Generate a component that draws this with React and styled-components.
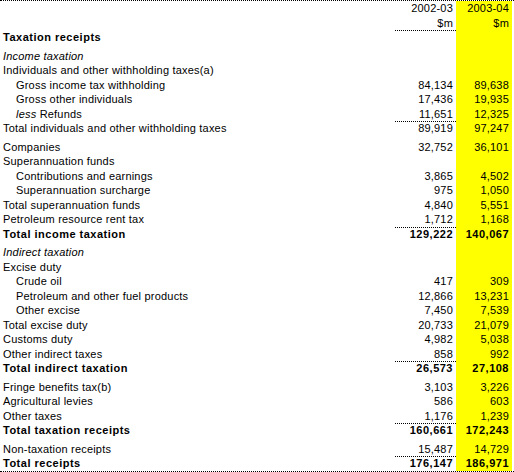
import styled, { createGlobalStyle } from "styled-components"

const GlobalStyle = createGlobalStyle`
    html, body {
        margin: 0;
        padding: 0;
        background: #fff;
    }
    body {
        font-family: "Liberation Sans", Arial, sans-serif;
        font-size: 11px;
        color: #000;
    }
`

const rows = [
    { label: "Taxation receipts", bold: true },
    { label: "Income taxation", italic: true, tall: true },
    { label: "Individuals and other withholding taxes(a)" },
    { label: "Gross income tax withholding", indent: true, a: "84,134", b: "89,638" },
    { label: "Gross other individuals", indent: true, a: "17,436", b: "19,935" },
    { label: "Refunds", less: true, indent: true, a: "11,651", b: "12,325", rule: true },
    { label: "Total individuals and other withholding taxes", a: "89,919", b: "97,247" },
    { label: "Companies", a: "32,752", b: "36,101", tall: true },
    { label: "Superannuation funds" },
    { label: "Contributions and earnings", indent: true, a: "3,865", b: "4,502" },
    { label: "Superannuation surcharge", indent: true, a: "975", b: "1,050" },
    { label: "Total superannuation funds", a: "4,840", b: "5,551" },
    { label: "Petroleum resource rent tax", a: "1,712", b: "1,168", rule: true },
    { label: "Total income taxation", bold: true, a: "129,222", b: "140,067" },
    { label: "Indirect taxation", italic: true, tall: true },
    { label: "Excise duty" },
    { label: "Crude oil", indent: true, a: "417", b: "309" },
    { label: "Petroleum and other fuel products", indent: true, a: "12,866", b: "13,231" },
    { label: "Other excise", indent: true, a: "7,450", b: "7,539" },
    { label: "Total excise duty", a: "20,733", b: "21,079" },
    { label: "Customs duty", a: "4,982", b: "5,038" },
    { label: "Other indirect taxes", a: "858", b: "992", rule: true },
    { label: "Total indirect taxation", bold: true, a: "26,573", b: "27,108" },
    { label: "Fringe benefits tax(b)", a: "3,103", b: "3,226", tall: true },
    { label: "Agricultural levies", a: "586", b: "603" },
    { label: "Other taxes", a: "1,176", b: "1,239", rule: true },
    { label: "Total taxation receipts", bold: true, a: "160,661", b: "172,243" },
    { label: "Non-taxation receipts", a: "15,487", b: "14,729", rule: true, tall: true },
    { label: "Total receipts", bold: true, a: "176,147", b: "186,971" },
]

export default function App() {
    return (
        <>
            <GlobalStyle />
            <Sheet>
                <Row>
                    <Label />
                    <Num>2002-03</Num>
                    <Num $hl>2003-04</Num>
                </Row>
                <Row>
                    <Label />
                    <Num $rule>$m</Num>
                    <Num $hl $rule>$m</Num>
                </Row>
                {rows.map((r, i) => (
                    <Row key={i} $tall={r.tall}>
                        <Label $indent={r.indent} $bold={r.bold} $italic={r.italic}>
                            {r.less && <i>less </i>}
                            {r.label}
                        </Label>
                        <Num $rule={r.rule} $bold={r.bold}>{r.a}</Num>
                        <Num $hl $rule={r.rule} $bold={r.bold}>{r.b}</Num>
                    </Row>
                ))}
            </Sheet>
        </>
    )
}

const Sheet = styled.div`
    width: 514px;
    border-top: 1px dotted #000;
    border-bottom: 1px dotted #000;
`

const Row = styled.div`
    display: grid;
    grid-template-columns: 395px 61px 56px;
    height: ${p => (p.$tall ? "18.5px" : "14.5px")};
    line-height: 14.5px;

    & > * {
        padding-top: ${p => (p.$tall ? "4px" : "0")};
    }
`

const Label = styled.div`
    padding-left: ${p => (p.$indent ? "16px" : "3px")};
    font-weight: ${p => (p.$bold ? 700 : 400)};
    font-style: ${p => (p.$italic ? "italic" : "normal")};
    letter-spacing: ${p => (p.$bold ? "0.5px" : "0.2px")};
    white-space: nowrap;
`

const Num = styled.div`
    box-sizing: border-box;
    height: 100%;
    text-align: right;
    padding-right: 3px;
    background: ${p => (p.$hl ? "#ffff00" : "transparent")};
    border-bottom: ${p => (p.$rule ? "1px dotted #000" : "none")};
    font-weight: ${p => (p.$bold ? 700 : 400)};
    letter-spacing: ${p => (p.$bold ? "0.5px" : "0.2px")};
    white-space: nowrap;
`
